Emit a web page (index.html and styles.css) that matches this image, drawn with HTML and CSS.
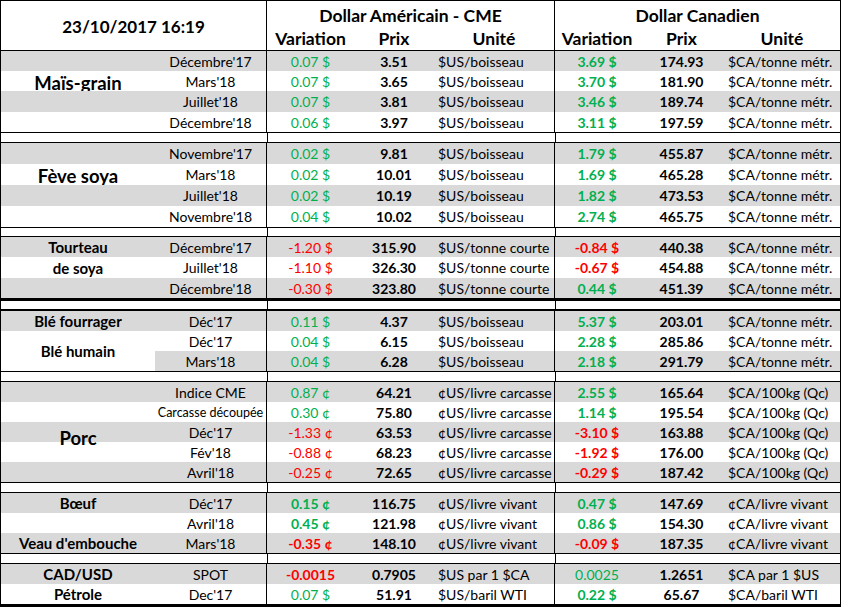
FILE: index.html
```html
<!DOCTYPE html>
<html lang="fr">
<head>
<meta charset="utf-8">
<title>Cours</title>
<link rel="stylesheet" href="styles.css">
</head>
<body>
<div class="sheet">
  <div class="head">
    <div class="date">23/10/2017 16:19</div>
    <div class="cur sep c3">Dollar Américain - CME</div>
    <div class="cur sep c6">Dollar Canadien</div>
    <div class="sub sep">Variation</div><div class="sub">Prix</div><div class="sub">Unité</div>
    <div class="sub sep">Variation</div><div class="sub">Prix</div><div class="sub">Unité</div>
  </div>

  <div class="sec mais">
    <div class="row g"><div class="lab"></div><div class="mo">Décembre'17</div><div class="var up sep">0.07 $</div><div class="px">3.51</div><div class="un">$US/boisseau</div><div class="var b up sep">3.69 $</div><div class="px">174.93</div><div class="un">$CA/tonne métr.</div></div>
    <div class="row"><div class="lab big">Maïs-grain</div><div class="mo">Mars'18</div><div class="var up sep">0.07 $</div><div class="px">3.65</div><div class="un">$US/boisseau</div><div class="var b up sep">3.70 $</div><div class="px">181.90</div><div class="un">$CA/tonne métr.</div></div>
    <div class="row g"><div class="lab"></div><div class="mo">Juillet'18</div><div class="var up sep">0.07 $</div><div class="px">3.81</div><div class="un">$US/boisseau</div><div class="var b up sep">3.46 $</div><div class="px">189.74</div><div class="un">$CA/tonne métr.</div></div>
    <div class="row"><div class="lab"></div><div class="mo">Décembre'18</div><div class="var up sep">0.06 $</div><div class="px">3.97</div><div class="un">$US/boisseau</div><div class="var b up sep">3.11 $</div><div class="px">197.59</div><div class="un">$CA/tonne métr.</div></div>
  </div>
  <div class="gap h9"><div class="s1"></div><div class="s2 sep"></div><div class="s3 sep"></div></div>

  <div class="sec feve">
    <div class="row g"><div class="lab"></div><div class="mo">Novembre'17</div><div class="var up sep">0.02 $</div><div class="px">9.81</div><div class="un">$US/boisseau</div><div class="var b up sep">1.79 $</div><div class="px">455.87</div><div class="un">$CA/tonne métr.</div></div>
    <div class="row"><div class="lab big">Fève soya</div><div class="mo">Mars'18</div><div class="var up sep">0.02 $</div><div class="px">10.01</div><div class="un">$US/boisseau</div><div class="var b up sep">1.69 $</div><div class="px">465.28</div><div class="un">$CA/tonne métr.</div></div>
    <div class="row g"><div class="lab"></div><div class="mo">Juillet'18</div><div class="var up sep">0.02 $</div><div class="px">10.19</div><div class="un">$US/boisseau</div><div class="var b up sep">1.82 $</div><div class="px">473.53</div><div class="un">$CA/tonne métr.</div></div>
    <div class="row"><div class="lab"></div><div class="mo">Novembre'18</div><div class="var up sep">0.04 $</div><div class="px">10.02</div><div class="un">$US/boisseau</div><div class="var b up sep">2.74 $</div><div class="px">465.75</div><div class="un">$CA/tonne métr.</div></div>
  </div>
  <div class="gap h8"><div class="s1"></div><div class="s2 sep"></div><div class="s3 sep"></div></div>

  <div class="sec tourteau">
    <div class="row g"><div class="lab">Tourteau</div><div class="mo">Décembre'17</div><div class="var dn sep">-1.20 $</div><div class="px">315.90</div><div class="un">$US/tonne courte</div><div class="var b dn sep">-0.84 $</div><div class="px">440.38</div><div class="un">$CA/tonne métr.</div></div>
    <div class="row"><div class="lab">de soya</div><div class="mo">Juillet'18</div><div class="var dn sep">-1.10 $</div><div class="px">326.30</div><div class="un">$US/tonne courte</div><div class="var b dn sep">-0.67 $</div><div class="px">454.88</div><div class="un">$CA/tonne métr.</div></div>
    <div class="row g"><div class="lab"></div><div class="mo">Décembre'18</div><div class="var dn sep">-0.30 $</div><div class="px">323.80</div><div class="un">$US/tonne courte</div><div class="var b up sep">0.44 $</div><div class="px">451.39</div><div class="un">$CA/tonne métr.</div></div>
  </div>
  <div class="gap h8 thick"><div class="s1"></div><div class="s2 sep"></div><div class="s3 sep"></div></div>

  <div class="sec ble">
    <div class="row g"><div class="lab">Blé fourrager</div><div class="mo">Déc'17</div><div class="var up sep">0.11 $</div><div class="px">4.37</div><div class="un">$US/boisseau</div><div class="var b up sep">5.37 $</div><div class="px">203.01</div><div class="un">$CA/tonne métr.</div></div>
    <div class="row"><div class="lab span2">Blé humain</div><div class="mo">Déc'17</div><div class="var up sep">0.04 $</div><div class="px">6.15</div><div class="un">$US/boisseau</div><div class="var b up sep">2.28 $</div><div class="px">285.86</div><div class="un">$CA/tonne métr.</div></div>
    <div class="row g"><div class="mo">Mars'18</div><div class="var up sep">0.04 $</div><div class="px">6.28</div><div class="un">$US/boisseau</div><div class="var b up sep">2.18 $</div><div class="px">291.79</div><div class="un">$CA/tonne métr.</div></div>
  </div>
  <div class="gap h9"><div class="s1"></div><div class="s2 sep"></div><div class="s3 sep"></div></div>

  <div class="sec porc">
    <div class="row g"><div class="lab"></div><div class="mo">Indice CME</div><div class="var up sep">0.87 ¢</div><div class="px">64.21</div><div class="un">¢US/livre carcasse</div><div class="var b up sep">2.55 $</div><div class="px">165.64</div><div class="un">$CA/100kg (Qc)</div></div>
    <div class="row"><div class="lab"></div><div class="mo small">Carcasse découpée</div><div class="var up sep">0.30 ¢</div><div class="px">75.80</div><div class="un">¢US/livre carcasse</div><div class="var b up sep">1.14 $</div><div class="px">195.54</div><div class="un">$CA/100kg (Qc)</div></div>
    <div class="row g"><div class="lab big low">Porc</div><div class="mo">Déc'17</div><div class="var dn sep">-1.33 ¢</div><div class="px">63.53</div><div class="un">¢US/livre carcasse</div><div class="var b dn sep">-3.10 $</div><div class="px">163.88</div><div class="un">$CA/100kg (Qc)</div></div>
    <div class="row"><div class="lab"></div><div class="mo">Fév'18</div><div class="var dn sep">-0.88 ¢</div><div class="px">68.23</div><div class="un">¢US/livre carcasse</div><div class="var b dn sep">-1.92 $</div><div class="px">176.00</div><div class="un">$CA/100kg (Qc)</div></div>
    <div class="row g"><div class="lab"></div><div class="mo">Avril'18</div><div class="var dn sep">-0.25 ¢</div><div class="px">72.65</div><div class="un">¢US/livre carcasse</div><div class="var b dn sep">-0.29 $</div><div class="px">187.42</div><div class="un">$CA/100kg (Qc)</div></div>
  </div>
  <div class="gap h9"><div class="s1"></div><div class="s2 sep"></div><div class="s3 sep"></div></div>

  <div class="sec boeuf">
    <div class="row g"><div class="lab">Bœuf</div><div class="mo">Déc'17</div><div class="var b up sep">0.15 ¢</div><div class="px">116.75</div><div class="un">¢US/livre vivant</div><div class="var b up sep">0.47 $</div><div class="px">147.69</div><div class="un">¢CA/livre vivant</div></div>
    <div class="row"><div class="lab"></div><div class="mo">Avril'18</div><div class="var b up sep">0.45 ¢</div><div class="px">121.98</div><div class="un">¢US/livre vivant</div><div class="var b up sep">0.86 $</div><div class="px">154.30</div><div class="un">¢CA/livre vivant</div></div>
    <div class="row g"><div class="lab">Veau d'embouche</div><div class="mo">Mars'18</div><div class="var b dn sep">-0.35 ¢</div><div class="px">148.10</div><div class="un">¢US/livre vivant</div><div class="var b dn sep">-0.09 $</div><div class="px">187.35</div><div class="un">¢CA/livre vivant</div></div>
  </div>
  <div class="gap h9"><div class="s1"></div><div class="s2 sep"></div><div class="s3 sep"></div></div>

  <div class="sec cad">
    <div class="row g"><div class="lab">CAD/USD</div><div class="mo">SPOT</div><div class="var b dn sep">-0.0015</div><div class="px">0.7905</div><div class="un">$US par 1 $CA</div><div class="var up sep">0.0025</div><div class="px">1.2651</div><div class="un">$CA par 1 $US</div></div>
    <div class="row"><div class="lab">Pétrole</div><div class="mo">Dec'17</div><div class="var up sep">0.07 $</div><div class="px">51.91</div><div class="un">$US/baril WTI</div><div class="var b up sep">0.22 $</div><div class="px">65.67</div><div class="un">$CA/baril WTI</div></div>
  </div>
</div>
</body>
</html>
```
FILE: styles.css
```css
* { box-sizing: border-box; }
html, body { margin: 0; padding: 0; background: #fff; }
body { font-family: Lato, "Liberation Sans", sans-serif; color: #000; font-size: 14px; }

.sheet {
  width: 841px;
  border-left: 1px solid #000;
  border-right: 1px solid #000;
  border-top: 1px solid #000;
  border-bottom: 3px solid #000;
}

.head, .sec, .gap {
  display: grid;
  grid-template-columns: 154px 111px 88px 80px 120px 85px 85px 116px;
  border-bottom: 1px solid #000;
}

.sep { border-left: 1px solid #000; }

.head { grid-template-rows: 26px 23px; }
.date {
  grid-column: 1 / 3; grid-row: 1 / 3;
  display: flex; align-items: center; justify-content: center;
  font-weight: 700; font-size: 17px; padding-top: 1px;
}
.cur {
  grid-column: span 3; grid-row: 1;
  display: flex; align-items: center; justify-content: center;
  font-weight: 700; font-size: 17.5px; padding-top: 3px;
}
.c3 { grid-column: 3 / 6; }
.c6 { grid-column: 6 / 9; }
.sub {
  grid-row: 2;
  display: flex; align-items: center; justify-content: center;
  font-weight: 700; font-size: 17.5px;
}

.row { display: contents; }
.row > div {
  display: flex; align-items: center; justify-content: center;
  white-space: nowrap; overflow: visible;
}
.row.g > div { background: #d9d9d9; }

.mais { grid-template-rows: 20px 20px 21px 20px; }
.feve { grid-template-rows: 21px 21px 21px 21px; }
.tourteau { grid-template-rows: 20px 21px 20px; border-bottom-width: 3px; }
.ble { grid-template-rows: 20px 20px 20px; }
.porc { grid-template-rows: 20px 20px 20px 20px 20px; }
.boeuf { grid-template-rows: 20px 20px 20px; }
.cad { grid-template-rows: 20px 20px; border-bottom: 0; }

.gap { grid-template-columns: 266px 288px 285px; }
.h9 { height: 10px; }
.h8 { height: 9px; }
.gap.thick { border-bottom-width: 2px; height: 10px; }

.lab { font-weight: 700; font-size: 15px; }
.lab.big { font-size: 18.5px; padding-top: 3px; }
.lab.low { padding-top: 12px; }
.row > .lab.span2 { grid-row: span 2; background: #fff; }

.mo { font-size: 14px; }
.mo.small { font-size: 12.5px; }
.var { font-size: 14px; }
.var.b { font-weight: 700; }
.up { color: #00b050; }
.dn { color: #ff0000; }
.px { font-weight: 700; font-size: 14px; }
.row > .un { justify-content: flex-start; padding-left: 4px; font-size: 14px; }
```
